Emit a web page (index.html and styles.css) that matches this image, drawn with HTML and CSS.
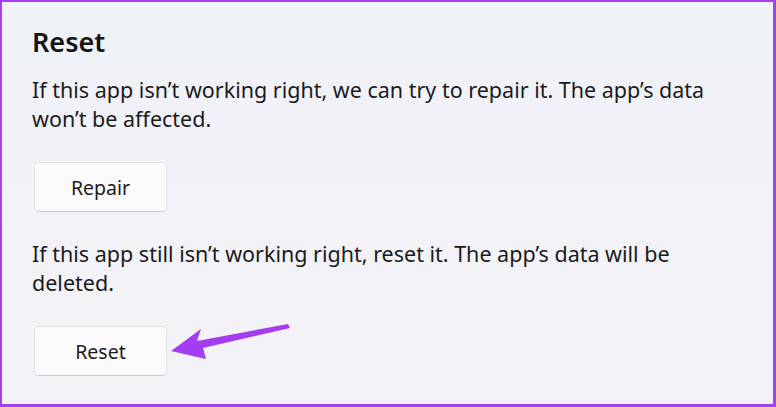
FILE: index.html
```html
<!DOCTYPE html>
<html lang="en">
<head>
<meta charset="utf-8">
<title>Reset</title>
<link rel="stylesheet" href="styles.css">
</head>
<body>
<div class="frame">
  <section class="panel">
    <h1 class="title">Reset</h1>
    <p class="desc">If this app isn’t working right, we can try to repair it. The app’s data won’t be affected.</p>
    <button class="btn">Repair</button>
    <p class="desc second">If this app still isn’t working right, reset it. The app’s data will be deleted.</p>
    <button class="btn">Reset</button>
  </section>
  <svg class="arrow" width="140" height="50" viewBox="160 315 140 50" aria-hidden="true">
    <polygon points="171,351 201,329 197,341 288,324 290,328 203,348 206,359" fill="#a43df2"/>
  </svg>
</div>
</body>
</html>
```
FILE: styles.css
```css
html, body {
  margin: 0;
  padding: 0;
}
body {
  font-family: "Noto Sans", "Open Sans", sans-serif;
  color: #1b1b1b;
}
.frame {
  position: relative;
  width: 776px;
  height: 407px;
  box-sizing: border-box;
  border-style: solid;
  border-color: #a63ff2;
  border-width: 2px 3px 3px 2px;
  background: linear-gradient(180deg, #eff2f7 0%, #f2f2f7 60%, #f4f2f8 100%);
  overflow: hidden;
}
.panel {
  display: flex;
  flex-direction: column;
  align-items: flex-start;
  padding: 22px 30px 0 30px;
}
.title {
  margin: 0;
  font-size: 27px;
  font-weight: 600;
  line-height: 36px;
  color: #141414;
}
.desc {
  margin: 15px 0 0 0;
  font-size: 21.5px;
  line-height: 29px;
  max-width: 700px;
}
.second {
  margin-top: 27px;
}
.btn {
  margin: 29px 0 0 2px;
  width: 133px;
  height: 50px;
  font-family: inherit;
  font-size: 19.5px;
  color: #1b1b1b;
  background: #fbfbfd;
  border: 1px solid #e1e1e6;
  border-bottom-color: #c9c9cf;
  border-radius: 5px;
  padding: 0;
}
.arrow {
  position: absolute;
  left: 158px;
  top: 313px;
}
```
